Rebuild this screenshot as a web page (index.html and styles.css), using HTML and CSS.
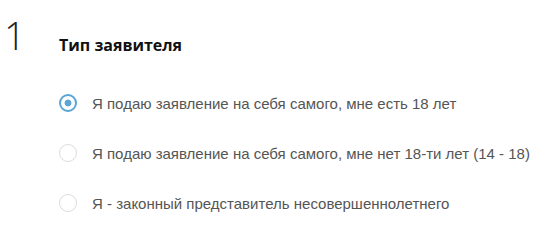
FILE: index.html
```html
<!DOCTYPE html>
<html lang="ru">
<head>
<meta charset="utf-8">
<link rel="stylesheet" href="styles.css">
</head>
<body>
<div class="step">
  <div class="step-num">1</div>
  <div class="step-body">
    <h2 class="step-title">Тип заявителя</h2>
    <ul class="options">
      <li class="option selected"><span class="radio"></span><span class="label">Я подаю заявление на себя самого, мне есть 18 лет</span></li>
      <li class="option"><span class="radio"></span><span class="label">Я подаю заявление на себя самого, мне нет 18-ти лет (14 - 18)</span></li>
      <li class="option"><span class="radio"></span><span class="label">Я - законный представитель несовершеннолетнего</span></li>
    </ul>
  </div>
</div>
</body>
</html>
```
FILE: styles.css
```css
html, body { margin: 0; padding: 0; background: #fff; }
.step { display: flex; padding: 16px 0 0 4px; }
.step-num {
  font-family: "Open Sans", sans-serif;
  font-weight: 300;
  font-size: 38px;
  line-height: 38px;
  color: #222;
  width: 55px;
}
.step-body { display: flex; flex-direction: column; }
.step-title {
  margin: 18px 0 0 0;
  font-family: "Open Sans", sans-serif;
  font-weight: 700;
  font-size: 16px;
  line-height: 22px;
  color: #111;
}
.options { list-style: none; margin: 37px 0 0 0; padding: 0; display: flex; flex-direction: column; gap: 30px; }
.option { display: flex; align-items: center; gap: 15px; height: 20px; }
.radio {
  box-sizing: border-box;
  width: 18px; height: 18px;
  border-radius: 50%;
  border: 1px solid #dcdcdc;
  flex: none;
}
.option.selected .radio {
  border: 2.5px solid #5aa5d6;
  background: radial-gradient(circle, #5aa5d6 0 3.2px, #fff 3.7px);
}
.label {
  font-family: "Liberation Sans", Arial, sans-serif;
  font-size: 15px;
  color: #555;
}
```
